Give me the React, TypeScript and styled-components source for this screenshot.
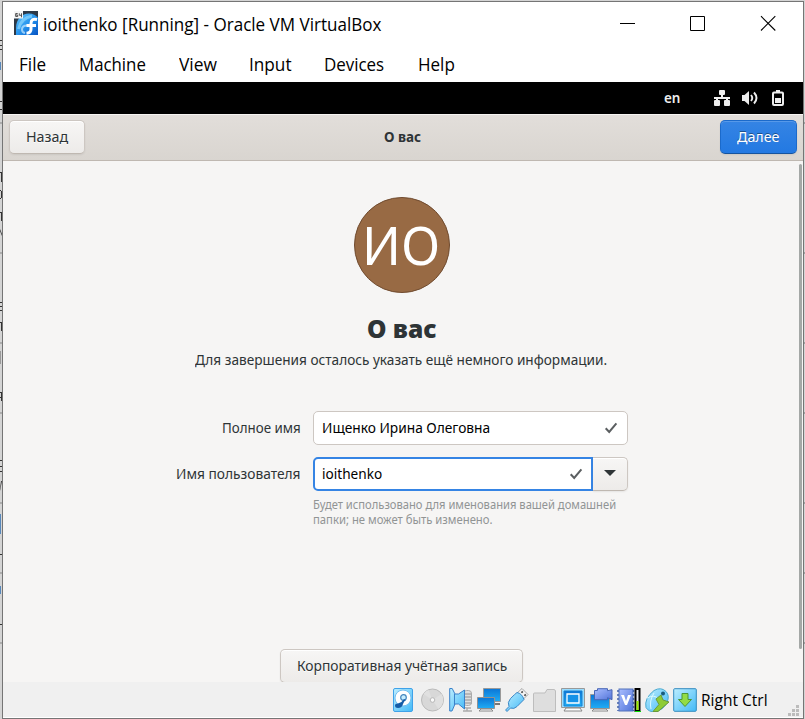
import React from 'react';
import styled, { createGlobalStyle } from 'styled-components';

const Global = createGlobalStyle`
  * { box-sizing: border-box; }
  html, body { margin: 0; width: 805px; height: 719px; overflow: hidden; background: #d2d2d2; }
  #root { height: 719px; }
`;

const Desktop = styled.div`
  display: flex;
  width: 805px;
  height: 719px;
  background: #d4d4d4;
  overflow: hidden;
`;
const Sliver = styled.svg`
  flex: none;
  display: block;
`;
const Window = styled.main`
  margin-top: 1px;
  width: 802px;
  height: 718px;
  flex: none;
  border: 1px solid #757575;
  background: #fff;
  display: flex;
  flex-direction: column;
  overflow: hidden;
`;
const winFont = `'Open Sans', 'Noto Sans', sans-serif`;
const uiFont = `'Noto Sans', sans-serif`;

/* A single line whose glyphs are condensed by a fixed ratio inside a box of known width. */
const Line = styled.span<{ $w: number; $s?: number }>`
  display: block;
  flex: none;
  width: ${p => p.$w}px;
  white-space: pre;
  transform: scaleX(${p => p.$s ?? 1});
  transform-origin: 0 50%;
  > i { font-style: normal; }
`;

const TitleBar = styled.header`
  height: 44px;
  flex: none;
  display: flex;
  align-items: center;
  padding-left: 11px;
  font: 18px/24px ${winFont};
  color: #000;
  > svg { flex: none; margin-bottom: 2px; }
`;
const Title = styled(Line)`margin: 0 0 1px 5px;`;
const WindowControls = styled.div`
  margin-left: auto;
  margin-right: 27px;
  margin-bottom: 2px;
  display: flex;
  gap: 54px;
`;
const MenuBar = styled.nav`
  height: 36px;
  flex: none;
  display: flex;
  align-items: center;
  padding: 0 0 1px 16px;
  font: 18px/24px ${winFont};
  color: #000;
`;
const MenuItem = styled(Line)<{ $gap: number }>`margin-right: ${p => p.$gap}px;`;

const TopBar = styled.div`
  height: 32px;
  flex: none;
  background: #000;
  display: flex;
  align-items: center;
  padding-left: 661px;
  color: #eee;
  font: 600 14px/20px ${uiFont};
`;
const TrayIcons = styled.div`
  display: flex;
  margin-left: 33px;
  gap: 12px;
`;
const HeaderBar = styled.div`
  height: 47px;
  flex: none;
  display: flex;
  justify-content: space-between;
  padding: 5px 6px 0;
  background: linear-gradient(#e2deda, #d9d5d0);
  border-top: 1px solid #f6f4f2;
  border-bottom: 1px solid #bfb8b1;
  font: 14.67px/20px ${uiFont};
`;
const Button = styled.button<{ $w: number; $primary?: boolean }>`
  width: ${p => p.$w}px;
  height: 34px;
  flex: none;
  padding: 0 0 2px;
  display: flex;
  justify-content: center;
  align-items: center;
  border: 1px solid ${p => (p.$primary ? '#1b6acb' : '#cdc7c2')};
  border-bottom-color: ${p => (p.$primary ? '#15539e' : '#bfb8b1')};
  border-radius: 5px;
  font: 14.67px/20px ${uiFont};
  color: ${p => (p.$primary ? '#fff' : '#2e3436')};
  background: ${p => (p.$primary ? 'linear-gradient(#3584e4, #2379e2)' : 'linear-gradient(#f7f6f5, #edebe9)')};
  box-shadow: inset 0 1px ${p => (p.$primary ? '#5799e9' : '#fff')}, 0 1px 2px rgba(0, 0, 0, .07);
  text-shadow: 0 ${p => (p.$primary ? '-1px rgba(0,0,0,.4)' : '1px rgba(255,255,255,.8)')};
  text-align: left;
`;
const BarTitle = styled(Line)`
  margin: 6px 0 0;
  font-weight: 700;
  color: #2e3436;
`;
const Page = styled.section`
  height: 521px;
  flex: none;
  background: #f6f5f4;
  display: flex;
  overflow: hidden;
  color: #2e3436;
  font: 14.67px/20px ${uiFont};
`;
const Content = styled.div`
  width: 796px;
  flex: none;
  display: flex;
  flex-direction: column;
  align-items: center;
  padding-top: 36px;
`;
const ScrollThumb = styled.div`
  width: 3px;
  height: 485px;
  margin-top: 3px;
  border-radius: 2px;
  background: #a4a8a6;
`;
const Avatar = styled.div`
  width: 96px;
  height: 96px;
  border-radius: 50%;
  flex: none;
  margin-left: 2px;
  background: #986a44;
  border: 1px solid #704b2f;
  color: #fff;
  display: flex;
  padding: 11px 0 0 7px;
  font: 52px/72px ${uiFont};
`;
const Heading = styled.h1`
  margin: 17px 0 0;
  padding-left: 364px;
  width: 796px;
  font: 900 25px/36px ${uiFont};
`;
const Intro = styled.div`
  margin-top: 3px;
  width: 796px;
  padding-left: 192px;
`;
const Form = styled.div`
  margin-top: 42px;
  width: 796px;
  display: grid;
  grid-template-columns: 297px 315px;
  column-gap: 13px;
  row-gap: 12px;
`;
const Label = styled.label`
  display: flex;
  justify-content: flex-end;
  align-items: center;
  height: 34px;
  padding-bottom: 2px;
`;
const Combo = styled.div`display: flex;`;
const Entry = styled.div<{ $focus?: boolean }>`
  height: 34px;
  width: ${p => (p.$focus ? 280 : 315)}px;
  flex: none;
  display: flex;
  align-items: center;
  justify-content: space-between;
  padding: 0 ${p => (p.$focus ? 7 : 8)}px 0 ${p => (p.$focus ? 7 : 8)}px;
  background: #fff;
  color: #000;
  border: ${p => (p.$focus ? '2px solid #3584e4' : '1px solid #cdc7c2')};
  border-radius: ${p => (p.$focus ? '5px 0 0 5px' : '5px')};
  > span { margin-bottom: 2px; }
`;
const DropButton = styled(Button)`
  border-left: 0;
  border-radius: 0 5px 5px 0;
`;
const Hint = styled.div`
  grid-column: 2;
  margin-top: -6px;
  color: #919494;
  font: 12px/15px ${uiFont};
`;
const EnterpriseRow = styled.div`
  margin-top: 122px;
  width: 796px;
  padding-left: 277px;
`;
const StatusBar = styled.footer`
  height: 35px;
  flex: none;
  display: flex;
  align-items: center;
  background: #f0f0f0;
  padding-left: 388px;
  gap: 4px;
  font: 16px/22px ${winFont};
  color: #000;
  > svg { flex: none; display: block; }
`;
const HostKey = styled(Line)`margin-left: 0;`;
const GripSlot = styled.div`
  margin-left: auto;
  margin-right: 4px;
  align-self: flex-end;
  height: 12px;
  > svg { display: block; }
`;

const Check = () => (
  <svg width="16" height="16" viewBox="0 0 16 16"><path d="M2.7 8.3 6.2 12 13.4 3.4" fill="none" stroke="#5b5f61" strokeWidth="2" /></svg>
);

const FedoraIcon = () => (
  <svg width="24" height="24" viewBox="0 0 24 24">
    <defs>
      <linearGradient id="fed" x1="0" y1="0" x2="1" y2="1"><stop stopColor="#69c8fb" /><stop offset=".5" stopColor="#2795ee" /><stop offset="1" stopColor="#0754c3" /></linearGradient>
    </defs>
    <rect width="24" height="24" fill="#2d3947" />
    <path d="M2 24V17C2 8 8 2.500 15 2.500c4 0 7 2 9 4V24z" fill="url(#fed)" />
    <path d="M4.500 18Q7 7 18 5" fill="none" stroke="#9bdfff" strokeWidth="3" opacity=".6" />
    <path d="M13 14.500q-5 0-5 4 0 3 3 3.500" fill="none" stroke="#bfe4ff" strokeWidth="2" opacity=".75" />
    <path d="M23 8.500q-6-1.500-6 4V18q0 4-4.500 4.300M12.500 14.500H22" fill="none" stroke="#fff" strokeWidth="3" />
    <rect width="9" height="7.500" fill="#f5f5f5" />
    <path d="M3.700 2.500H1.700v3h2v-1.500h-2M5.300 2.300v2h2.200M7.500 2.300v4" fill="none" stroke="#444" strokeWidth=".9" />
  </svg>
);

const Controls = () => (
  <WindowControls>
    <svg width="16" height="16" viewBox="0 0 16 16"><path d="M0 8.500H15" stroke="#000" /></svg>
    <svg width="16" height="16" viewBox="0 0 16 16"><path d="M.5 1.500h14v14H.5z" fill="none" stroke="#000" /></svg>
    <svg width="16" height="16" viewBox="0 0 16 16"><path d="M1 1.200 15.300 15.500M15.300 1.200 1 15.500" stroke="#000" strokeWidth="1.100" /></svg>
  </WindowControls>
);

const Tray = () => (
  <TrayIcons>
    <svg width="16" height="16" viewBox="0 0 16 16" fill="#eee"><path d="M6 0h4q1 0 1 1v3q0 1-1 1H9v2h5v3h1q1 0 1 1v4q0 1-1 1h-4q-1 0-1-1v-4q0-1 1-1h1V9H4v1h1q1 0 1 1v4q0 1-1 1H1q-1 0-1-1v-4q0-1 1-1h1V9H0V7h7V5H6Q5 5 5 4V1q0-1 1-1zM14 7h2v2h-2z" /></svg>
    <svg width="16" height="16" viewBox="0 0 16 16" fill="none" stroke="#eee"><path d="M0 5h2.500L7 1v14l-4.500-4H0z" fill="#eee" stroke="none" /><path d="M9 5q2.500 3 0 6M12 2.500q5 5.500 0 11" strokeWidth="1.900" /></svg>
    <svg width="16" height="16" viewBox="0 0 16 16" fill="#eee"><path d="M6 0h4v1.500h2q2 0 2 2V14q0 2-2 2H4q-2 0-2-2V3.500q0-2 2-2h2zM4.500 3.500Q4 3.500 4 4v9.500q0 .5.5.5h7q.5 0 .5-.5V4q0-.5-.5-.5z" fillRule="evenodd" /><path d="M5 8h6v5H5z" /></svg>
  </TrayIcons>
);

const DeviceIcons = () => (
  <>
    <svg width="24" height="24" viewBox="0 0 24 24">
      <defs>
        <linearGradient id="sky" x1="0" y1="0" x2="1" y2="1"><stop stopColor="#bdeeff" /><stop offset="1" stopColor="#42b9f7" /></linearGradient>
        <linearGradient id="screen" x1="0" y1="0" x2="0" y2="1"><stop stopColor="#0b75d5" /><stop offset="1" stopColor="#20adf5" /></linearGradient>
        <linearGradient id="violet" x1="0" y1="0" x2="1" y2="1"><stop stopColor="#a9bdff" /><stop offset="1" stopColor="#5274d9" /></linearGradient>
      </defs>
      <rect x="2.500" y=".5" width="19" height="23" rx="1.500" fill="url(#sky)" stroke="#3fa2e9" />
      <circle cx="12" cy="10" r="8" fill="#fff" stroke="#74bff0" />
      <circle cx="12.500" cy="9.500" r="2.800" fill="#c7eeff" stroke="#4385bd" strokeWidth="1.200" />
      <path d="M15 12q-2 1-3 4-1 4-5 4-3 0-3-2.500 0-2 3-2 4-1 6-4.500z" fill="#155ca7" />
    </svg>
    <svg width="26" height="24" viewBox="0 0 26 24"><circle cx="13.500" cy="12" r="11" fill="#d8d8d8" stroke="#bababa" /><path d="m13.500 12 9-6a11 11 0 0 1-3 15zM13.500 12 4.500 6a11 11 0 0 1 5-4z" fill="#e0e0e0" /><circle cx="13.500" cy="12" r="2.300" fill="#fafafa" stroke="#b8b8b8" /></svg>
    <svg width="24" height="24" viewBox="0 0 24 24">
      <rect x="14.500" y="2.500" width="8" height="15" rx="3" fill="#ddd" stroke="#aaa" /><path d="M16 6h7m-7 3h7m-7 3h7m-7 3h7M12 14q0 6 6 6h4M18 20v3m-4 0h9" fill="none" stroke="#aaa" strokeWidth="1.300" />
      <path d="M.7.500h2.500L6 6h3.500l6-4v19l-6-5H6l-3 7H.7z" fill="url(#sky)" stroke="#3b82ca" /><path d="M5.500 6v11" stroke="#3b82ca" />
    </svg>
    <svg width="24" height="24" viewBox="0 0 24 24"><path d="M6.500.5h17v13h-17z" fill="url(#screen)" stroke="#999" /><path d="M17 15h6v2h-6z" fill="#777" /><path d="M.5 9.500h17v11H.5z" fill="url(#screen)" stroke="#929292" /><path d="M4 21h10l2 2H2z" fill="#fff" stroke="#888" /></svg>
    <svg width="24" height="24" viewBox="0 0 24 24"><path d="m12 5 5-4.500 6 6-5 5z" fill="#f4f4f4" stroke="#a7a7a7" /><path d="m16.500 3.500 1.200 1.200m1.800 1.800 1.200 1.200" stroke="#444" strokeWidth="1.800" /><path d="M5.500 10.500Q10 6 12 4.500q5 1 7 7l-7 7q-3 3-6.500 1.500L2 23.500.6 22 4 18.500q-2-4 1.500-8z" fill="url(#sky)" stroke="#3d87c6" /></svg>
    <svg width="24" height="24" viewBox="0 0 24 24"><path d="M.5 23.500V6q0-1 1-1H12l2-3.500h7q1 0 1.500 1.500v20.500z" fill="#dedede" stroke="#bdbdbd" /></svg>
    <svg width="24" height="24" viewBox="0 0 24 24"><path d="M.5.500h23v19H.5z" fill="#96dcff" stroke="#999" /><path d="M3 3h18v15H3z" fill="url(#screen)" stroke="#1681d3" /><path d="M6 6h12v9H6z" fill="#1592e8" stroke="#fff" strokeWidth="1.300" /><path d="m5 20-2 3h18l-2-3z" fill="#fff" stroke="#888" /></svg>
    <svg width="24" height="24" viewBox="0 0 24 24"><path d="M1.500 6.500h19v14h-19z" fill="url(#screen)" stroke="#999" /><path d="m5 21-2 2h16l-2-2z" fill="#fff" stroke="#888" /><path d="M5.500 2.500h3V.7h10v2l4.500-1v10l-4.500-2v2h-13z" fill="url(#violet)" stroke="#4865b5" /></svg>
    <svg width="24" height="24" viewBox="0 0 24 24"><rect x="2" y="1" width="14" height="22" fill="url(#violet)" stroke="#5272ba" /><path d="M1 2v21M16.500 2v21" stroke="#4162aa" strokeWidth="1.500" strokeDasharray="2 2" /><path d="m4 7 4 10h2l4-10h-3l-2 6-2-6z" fill="#fff" /><path d="M18.500 1h4v22h-4z" fill="#eee" stroke="#000" strokeWidth="2" /><path d="M19.500 13h2v9h-2z" fill="#9df000" /><path d="M18 23h6v1h-6z" fill="#00e000" /></svg>
    <svg width="24" height="24" viewBox="0 0 24 24"><path d="M9 2.500q7-4 12 1 4 4 1 11-4 8-12 9-6 1-9-4-2-9 8-17z" fill="url(#sky)" stroke="#4aa9cf" /><path d="M2 10q7-4 12 1M6 21q-2-8 3-16" stroke="#d9faff" fill="none" /><path d="m11 11 5-4 2 5 6 2-11 9.500H8l6-7z" fill="#8dcc35" stroke="#699a3b" /><circle cx="18" cy="5.500" r="2" fill="#175b7c" /></svg>
    <svg width="24" height="24" viewBox="0 0 24 24"><rect x=".7" y=".7" width="22.600" height="22.600" rx="1" fill="url(#sky)" stroke="#338bbf" /><path d="M9 5.500h6v6h3.500L12 18.500l-6.500-7H9z" fill="#93dc46" stroke="#4b9634" /></svg>
  </>
);

const menu: [string, number, number, number][] = [
  ['File', 27, 33, .95], ['Machine', 66, 34, .935], ['View', 38, 32, .965],
  ['Input', 42, 33, .955], ['Devices', 60, 34, .94], ['Help', 36, 0, .945],
];

export default function App() {
  return (
    <>
      <Global />
      <Desktop>
        <Sliver width="2" height="719" viewBox="0 0 2 719">
          <path d="M0 123h2M0 253h2M0 343h2M0 413h2M0 503h2M0 573h2M0 643h2" stroke="#a0a0a0" strokeWidth="1.500" />
          <path d="M0 40h2v1H0zM0 45h2v1H0zM0 49h2v1H0zM0 101h2v1H0zM0 109h2v1H0zM0 172h2v1H0zM1 173h1v9H1zM0 190h1v1H0zM1 191h1v7H1zM0 198h1v1H0zM0 212h2v1H0zM1 213h1v8H1zM0 229l2 5v2l-2-5zM0 302h2v1H0zM0 306h2v1H0zM0 310h2v1H0zM0 322h2v1H0zM1 323h1v8H1zM0 392h2v1H0zM1 393h1v8H1zM0 397h1v1H0zM0 460h2v1H0zM0 466h2v1H0zM0 471h2v1H0zM2 481l-2 10v-2l1-8zM0 554h2v1H0zM0 624h2v1H0z" fill="#333" />
          <path d="M0 62h1v8H0zM0 514h1v20H0zM0 586h1v8H0z" fill="#5787ba" />
          <path d="M0 351h1v13H0z" fill="#999" />
        </Sliver>
        <Window>
          <TitleBar><FedoraIcon /><Title $w={338} $s={.947}>ioithenko [Running] - Oracle VM VirtualBox</Title><Controls /></TitleBar>
          <MenuBar>{menu.map(([t, w, gap, s]) => <MenuItem key={t} $w={w} $gap={gap} $s={s}>{t}</MenuItem>)}</MenuBar>
          <TopBar><Line $w={17} $s={.96}>en</Line><Tray /></TopBar>
          <HeaderBar>
            <Button $w={76}><Line $w={43} $s={.975}>Назад</Line></Button>
            <BarTitle $w={38} $s={.92}>О вас</BarTitle>
            <Button $w={77} $primary><Line $w={43} $s={.975}>Далее</Line></Button>
          </HeaderBar>
          <Page>
            <Content>
              <Avatar><Line $w={76} $s={.99}>ИО</Line></Avatar>
              <Heading><Line $w={70} $s={.985}>О вас</Line></Heading>
              <Intro><Line $w={412} $s={.93}><i>Для завершения осталось указать ещё немного информации.</i></Line></Intro>
              <Form>
                <Label><Line $w={78} $s={.91}>Полное имя</Line></Label>
                <Entry><Line $w={168} $s={.937}>Ищенко Ирина Олеговна</Line><Check /></Entry>
                <Label><Line $w={124} $s={.938}>Имя пользователя</Line></Label>
                <Combo>
                  <Entry $focus><Line $w={60} $s={.93}>ioithenko</Line><Check /></Entry>
                  <DropButton $w={35}><svg width="12" height="6" viewBox="0 0 12 6"><path d="M0 0h12L6 6z" fill="#2e3436" /></svg></DropButton>
                </Combo>
                <Hint><Line $w={303} $s={.932}>Будет использовано для именования вашей домашней</Line><Line $w={180} $s={.94}>папки; не может быть изменено.</Line></Hint>
              </Form>
              <EnterpriseRow><Button $w={243}><Line $w={210} $s={.942}>Корпоративная учётная запись</Line></Button></EnterpriseRow>
            </Content>
            <ScrollThumb />
          </Page>
          <StatusBar>
            <DeviceIcons />
            <HostKey $w={67} $s={.97}>Right Ctrl</HostKey>
            <GripSlot><svg width="11" height="11" viewBox="0 0 11 11" fill="#bcbcbc"><path d="M8 0h3v3H8zM8 4h3v3H8zM4 4h3v3H4zM0 8h3v3H0zM4 8h3v3H4zM8 8h3v3H8z" /></svg></GripSlot>
          </StatusBar>
        </Window>
        <Sliver width="1" height="719" viewBox="0 0 1 719">
          <path d="M0 123h1M0 253h1M0 343h1M0 413h1M0 503h1M0 573h1M0 643h1" stroke="#a0a0a0" strokeWidth="2" />
        </Sliver>
      </Desktop>
    </>
  );
}
